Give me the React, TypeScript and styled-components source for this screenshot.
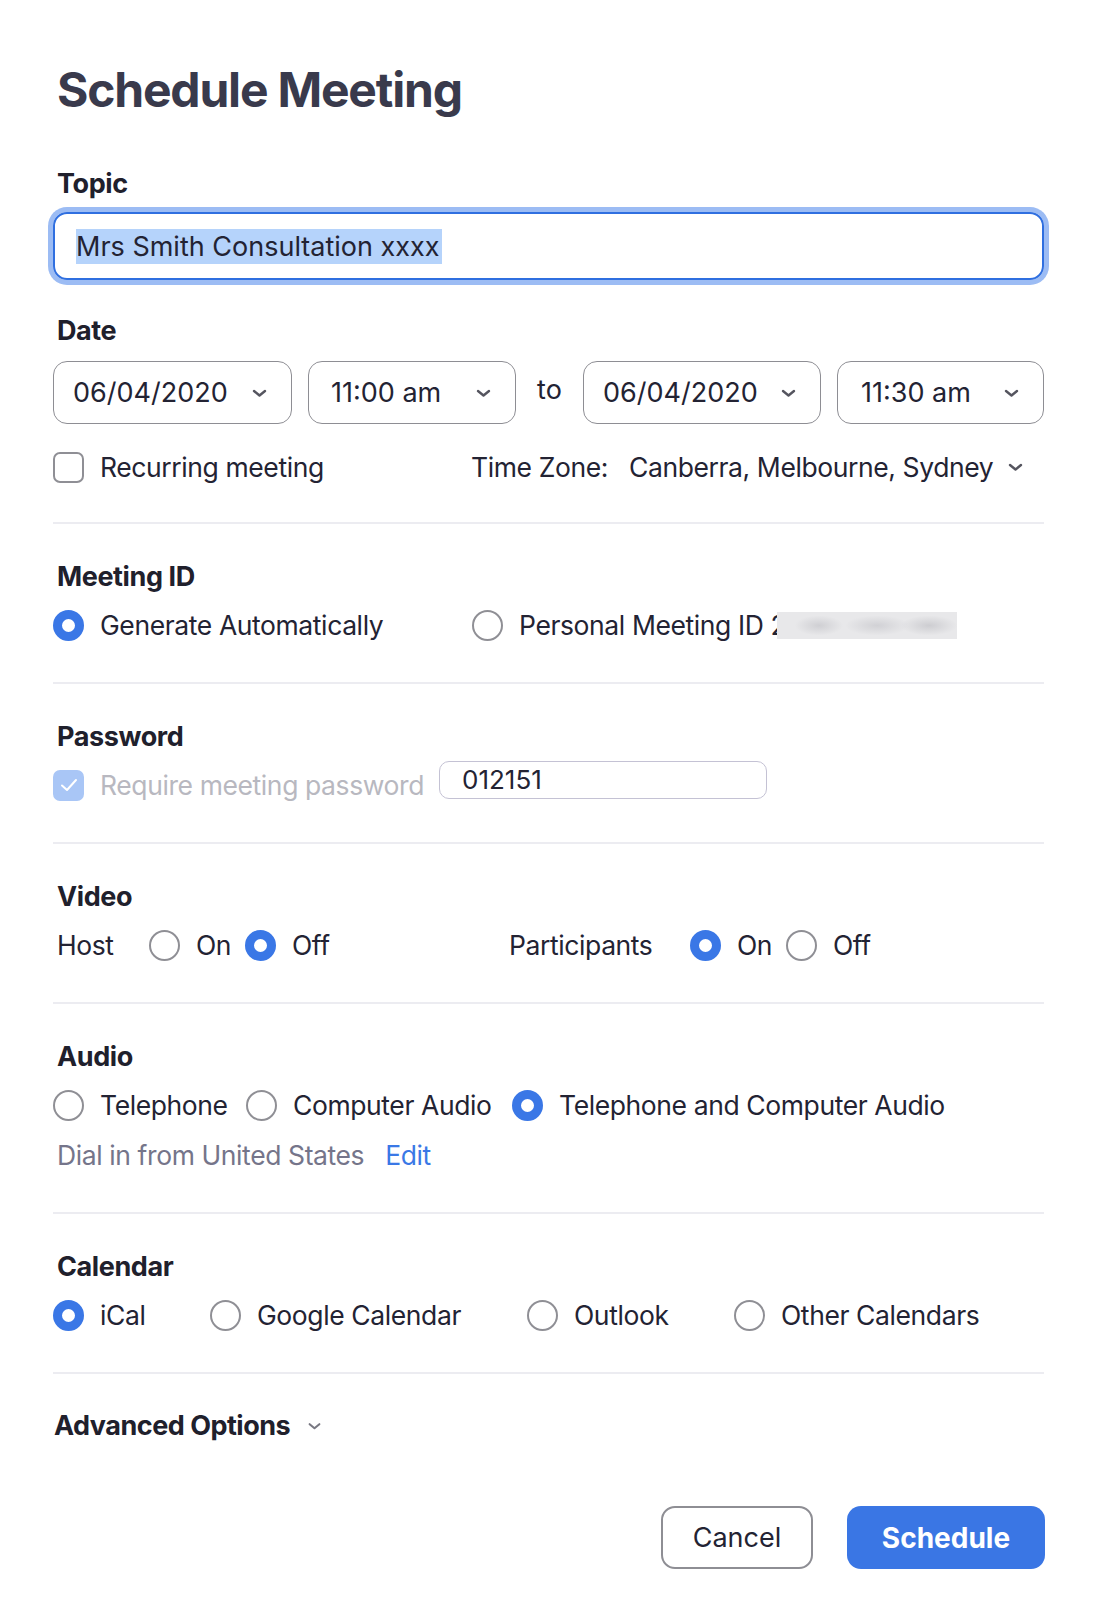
import React from "react";
import styled, { createGlobalStyle } from "styled-components";

const Global = createGlobalStyle`
  html, body { margin: 0; padding: 0; background: #ffffff; }
  body {
    font-family: Inter, "Noto Sans", sans-serif;
    color: #232333;
    -webkit-font-smoothing: antialiased;
  }
`;

const Page = styled.div`
  width: 991px;
  padding: 60px 56px 47px 53px;
`;

const Title = styled.h1`
  margin: 0 0 0 4px;
  font-size: 48px;
  line-height: 60px;
  font-weight: 700;
  color: #393a4c;
  letter-spacing: -1.2px;
`;

const Section = styled.section<{ $top: number; $bottom?: number }>`
  padding: ${(p) => p.$top}px 0 ${(p) => p.$bottom ?? 37}px;
  border-bottom: 2px solid #ececf1;
`;

const TopBlock = styled.div`
  padding-top: 48px;
`;

const Label = styled.div`
  margin-left: 4px;
  font-size: 27px;
  line-height: 32px;
  font-weight: 700;
  letter-spacing: -0.4px;
  color: #20202c;
`;

const TopicInput = styled.div`
  margin-top: 12px;
  height: 68px;
  box-sizing: border-box;
  border: 2px solid #2f6fe0;
  border-radius: 14px;
  box-shadow: 0 0 0 5px #9cbcf4;
  display: flex;
  align-items: center;
  padding-left: 21px;
`;

const Selected = styled.span`
  background: #b5d3fb;
  font-size: 27px;
  line-height: 35px;
  padding-right: 2px;
  color: #232333;
`;

const DateRow = styled.div`
  margin-top: 14px;
  display: flex;
  align-items: center;
  gap: 16px;
`;

const Select = styled.div<{ $w: number; $pl: number }>`
  flex: 0 0 ${(p) => p.$w}px;
  height: 63px;
  box-sizing: border-box;
  border: 1.5px solid #8e8e94;
  border-radius: 14px;
  display: flex;
  align-items: center;
  justify-content: space-between;
  padding: 0 23px 0 ${(p) => p.$pl}px;
  font-size: 27px;
  color: #232333;
`;

const ToText = styled.span`
  flex: 1;
  text-align: center;
  font-size: 27px;
  margin: 0 -16px 7px;
  color: #232333;
`;

const Row = styled.div<{ $mt?: number }>`
  margin-top: ${(p) => p.$mt ?? 12}px;
  height: 40px;
  display: flex;
  align-items: center;
  font-size: 26.5px;
  letter-spacing: -0.4px;
  line-height: 40px;
  color: #232333;
  white-space: nowrap;
`;

const Option = styled.label<{ $w?: number; $muted?: boolean }>`
  display: flex;
  align-items: center;
  gap: 16px;
  flex: ${(p) => (p.$w ? `0 0 ${p.$w}px` : "0 0 auto")};
  color: ${(p) => (p.$muted ? "#b8b8c0" : "#232333")};
`;

const Radio = styled.span<{ $on?: boolean }>`
  flex: none;
  width: 31px;
  height: 31px;
  box-sizing: border-box;
  border-radius: 50%;
  background: #ffffff;
  border: ${(p) => (p.$on ? "9.5px solid #3a77e6" : "2px solid #8f8f95")};
`;

const Check = styled.span<{ $on?: boolean }>`
  flex: none;
  width: 31px;
  height: 31px;
  box-sizing: border-box;
  border-radius: 7px;
  border: ${(p) => (p.$on ? "none" : "2px solid #8f8f95")};
  background: ${(p) => (p.$on ? "#a9c6f6" : "#ffffff")};
  display: flex;
  align-items: center;
  justify-content: center;
`;

const Plain = styled.span<{ $w?: number; $ml?: number }>`
  flex: ${(p) => (p.$w ? `0 0 ${p.$w}px` : "0 0 auto")};
  margin-left: ${(p) => p.$ml ?? 0}px;
`;

const ZoneValue = styled.span`
  margin-left: 21px;
  margin-right: 14px;
`;

const Blurred = styled.span`
  flex: none;
  display: inline-block;
  width: 180px;
  height: 27px;
  margin-left: -9px;
  background:
    radial-gradient(ellipse 24px 10px at 42px 50%, #cfcfd3, rgba(233, 233, 235, 0)),
    radial-gradient(ellipse 32px 10px at 100px 50%, #d1d1d5, rgba(233, 233, 235, 0)),
    radial-gradient(ellipse 28px 10px at 152px 50%, #cdcdd1, rgba(233, 233, 235, 0)),
    #e8e8ea;
`;

const PassInput = styled.div`
  flex: 0 0 328px;
  height: 38px;
  box-sizing: border-box;
  border: 1.5px solid #c4c2d4;
  border-radius: 10px;
  margin-bottom: 10px;
  padding-left: 22px;
  display: flex;
  align-items: center;
  font-size: 26px;
  letter-spacing: 0;
  color: #232333;
`;

const SubRow = styled.div`
  margin-top: 10px;
  margin-left: 4px;
  height: 40px;
  display: flex;
  align-items: center;
  gap: 21px;
  font-size: 26.5px;
  letter-spacing: -0.4px;
  line-height: 40px;
  color: #75758a;
`;

const EditLink = styled.a`
  color: #3a78e6;
  text-decoration: none;
`;

const Advanced = styled.div`
  margin: 36px 0 0 1px;
  display: flex;
  align-items: center;
  gap: 17px;
  font-size: 27px;
  line-height: 32px;
  font-weight: 700;
  letter-spacing: -0.5px;
  color: #20202c;
`;

const Buttons = styled.div`
  margin-top: 64px;
  display: flex;
  justify-content: flex-end;
  gap: 34px;
`;

const Button = styled.button<{ $primary?: boolean }>`
  height: 63px;
  width: ${(p) => (p.$primary ? 198 : 152)}px;
  box-sizing: border-box;
  border-radius: 14px;
  font-family: Inter, "Noto Sans", sans-serif;
  font-size: ${(p) => (p.$primary ? 28 : 27)}px;
  font-weight: ${(p) => (p.$primary ? 700 : 400)};
  border: ${(p) => (p.$primary ? "none" : "2px solid #8e8e94")};
  background: ${(p) => (p.$primary ? "#3a76e4" : "#ffffff")};
  color: ${(p) => (p.$primary ? "#ffffff" : "#232333")};
  margin-right: ${(p) => (p.$primary ? -1 : 0)}px;
`;

const ChevronSvg = styled.svg`
  flex: none;
`;

const Chevron = ({ w = 17, color = "#55555f" }: { w?: number; color?: string }) => (
  <ChevronSvg width={w} height={10} viewBox="0 0 17 10" fill="none">
    <polyline
      points="3,3 8.5,7.5 14,3"
      stroke={color}
      strokeWidth={2.4}
      strokeLinecap="round"
      strokeLinejoin="round"
    />
  </ChevronSvg>
);

const Tick = () => (
  <svg width={20} height={16} viewBox="0 0 20 16" fill="none">
    <polyline
      points="3,8.5 8,13 17,3"
      stroke="#ffffff"
      strokeWidth={2}
      strokeLinecap="round"
      strokeLinejoin="round"
    />
  </svg>
);

export default function App() {
  return (
    <>
      <Global />
      <Page>
        <Title>Schedule Meeting</Title>

        <TopBlock>
          <Label>Topic</Label>
          <TopicInput>
            <Selected>Mrs Smith Consultation xxxx</Selected>
          </TopicInput>
        </TopBlock>

        <Section $top={35} $bottom={35}>
          <Label>Date</Label>
          <DateRow>
            <Select $w={239} $pl={19}>
              06/04/2020 <Chevron />
            </Select>
            <Select $w={208} $pl={22}>
              11:00 am <Chevron />
            </Select>
            <ToText>to</ToText>
            <Select $w={238} $pl={19}>
              06/04/2020 <Chevron />
            </Select>
            <Select $w={207} $pl={23}>
              11:30 am <Chevron />
            </Select>
          </DateRow>
          <Row $mt={23}>
            <Option $w={418}>
              <Check />
              Recurring meeting
            </Option>
            <Plain>Time Zone:</Plain>
            <ZoneValue>Canberra, Melbourne, Sydney</ZoneValue>
            <Chevron />
          </Row>
        </Section>

        <Section $top={37}>
          <Label>Meeting ID</Label>
          <Row>
            <Option $w={419}>
              <Radio $on />
              Generate Automatically
            </Option>
            <Option>
              <Radio />
              Personal Meeting ID 2
            </Option>
            <Blurred />
          </Row>
        </Section>

        <Section $top={37}>
          <Label>Password</Label>
          <Row>
            <Option $w={386} $muted>
              <Check $on>
                <Tick />
              </Check>
              Require meeting password
            </Option>
            <PassInput>012151</PassInput>
          </Row>
        </Section>

        <Section $top={37}>
          <Label>Video</Label>
          <Row>
            <Plain $w={92} $ml={4}>
              Host
            </Plain>
            <Option $w={96}>
              <Radio />
              On
            </Option>
            <Option $w={264}>
              <Radio $on />
              Off
            </Option>
            <Plain $w={181}>Participants</Plain>
            <Option $w={96}>
              <Radio $on />
              On
            </Option>
            <Option>
              <Radio />
              Off
            </Option>
          </Row>
        </Section>

        <Section $top={37}>
          <Label>Audio</Label>
          <Row>
            <Option $w={193}>
              <Radio />
              Telephone
            </Option>
            <Option $w={266}>
              <Radio />
              Computer Audio
            </Option>
            <Option>
              <Radio $on />
              Telephone and Computer Audio
            </Option>
          </Row>
          <SubRow>
            <span>Dial in from United States</span>
            <EditLink href="#">Edit</EditLink>
          </SubRow>
        </Section>

        <Section $top={37}>
          <Label>Calendar</Label>
          <Row>
            <Option $w={157}>
              <Radio $on />
              iCal
            </Option>
            <Option $w={317}>
              <Radio />
              Google Calendar
            </Option>
            <Option $w={207}>
              <Radio />
              Outlook
            </Option>
            <Option>
              <Radio />
              Other Calendars
            </Option>
          </Row>
        </Section>

        <Advanced>
          Advanced Options
          <Chevron w={15} color="#787882" />
        </Advanced>

        <Buttons>
          <Button>Cancel</Button>
          <Button $primary>Schedule</Button>
        </Buttons>
      </Page>
    </>
  );
}
